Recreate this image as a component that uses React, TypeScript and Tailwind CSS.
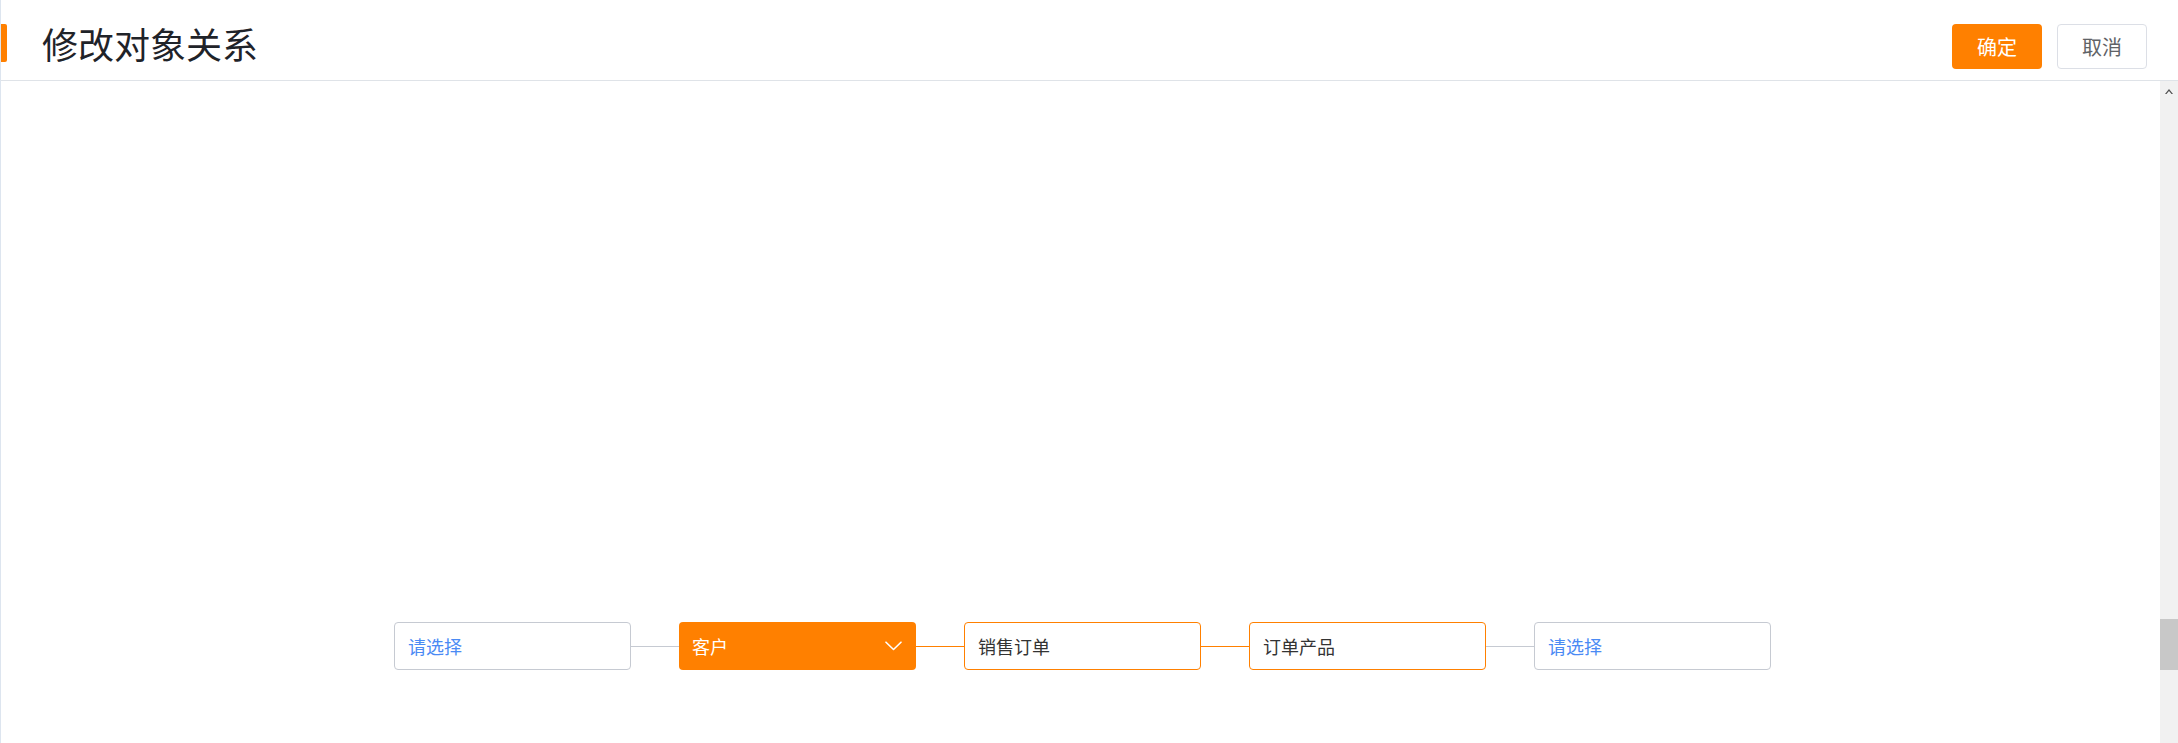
import React from "react";

const FONT = '"Noto Sans CJK SC", "Noto Sans", sans-serif';

function Node({ label, variant }: { label: string; variant: "empty" | "active" | "filled" }) {
  if (variant === "active") {
    return (
      <div className="w-[237px] h-[48px] shrink-0 rounded-[4px] bg-[#ff8000] flex items-center justify-between pl-[13px] pr-[14px] text-white text-[18px]">
        <span>{label}</span>
        <svg width="17" height="10" viewBox="0 0 17 10" fill="none">
          <path d="M1 1.2 L8.5 8.5 L16 1.2" stroke="white" strokeWidth="1.6" strokeLinecap="round" strokeLinejoin="round" />
        </svg>
      </div>
    );
  }
  if (variant === "filled") {
    return (
      <div className="w-[237px] h-[48px] shrink-0 rounded-[4px] border border-[#ff8000] bg-white flex items-center pl-[13px] text-[#333333] text-[18px]">
        {label}
      </div>
    );
  }
  return (
    <div className="w-[237px] h-[48px] shrink-0 rounded-[4px] border border-[#c6cad2] bg-white flex items-center pl-[13px] text-[#4a8af4] text-[18px]">
      {label}
    </div>
  );
}

function Line({ orange }: { orange?: boolean }) {
  return <div className={orange ? "w-[48px] h-px bg-[#ff8000] shrink-0" : "w-[48px] h-px bg-[#c6cad2] shrink-0"} />;
}

export default function App() {
  return (
    <div className="w-full h-[743px] flex flex-col bg-white border-l border-[#dde5ef] overflow-hidden" style={{ fontFamily: FONT }}>
      <div className="h-[81px] shrink-0 border-b border-[#dfe3e8] flex items-start">
        <div className="w-[6px] h-[38px] mt-[24px] bg-[#ff8000] rounded-r-[2px]" />
        <div className="ml-[35px] mt-[21px] h-[44px] leading-[44px] text-[36px] text-[#1f2329]">修改对象关系</div>
        <div className="flex-1" />
        <button className="mt-[24px] w-[90px] h-[45px] rounded-[4px] bg-[#ff8000] text-white text-[20px] flex items-center justify-center">
          确定
        </button>
        <button className="mt-[24px] ml-[15px] mr-[31px] w-[90px] h-[45px] rounded-[4px] border border-[#dcdfe6] bg-white text-[#606266] text-[20px] flex items-center justify-center">
          取消
        </button>
      </div>
      <div className="flex-1 flex min-h-0">
        <div className="flex-1 pt-[541px]">
          <div className="flex items-center justify-center pl-[4px]">
            <Node label="请选择" variant="empty" />
            <Line />
            <Node label="客户" variant="active" />
            <Line orange />
            <Node label="销售订单" variant="filled" />
            <Line orange />
            <Node label="订单产品" variant="filled" />
            <Line />
            <Node label="请选择" variant="empty" />
          </div>
        </div>
        <div className="w-[18px] shrink-0 bg-[#f1f1f1] flex flex-col items-center">
          <svg className="mt-[8px]" width="8" height="5" viewBox="0 0 8 5">
            <path d="M0 5 L4 0 L8 5 L6.5 5 L4 2 L1.5 5 Z" fill="#505050" />
          </svg>
          <div className="mt-[525px] w-full h-[51px] bg-[#c8c8c8]" />
        </div>
      </div>
    </div>
  );
}
